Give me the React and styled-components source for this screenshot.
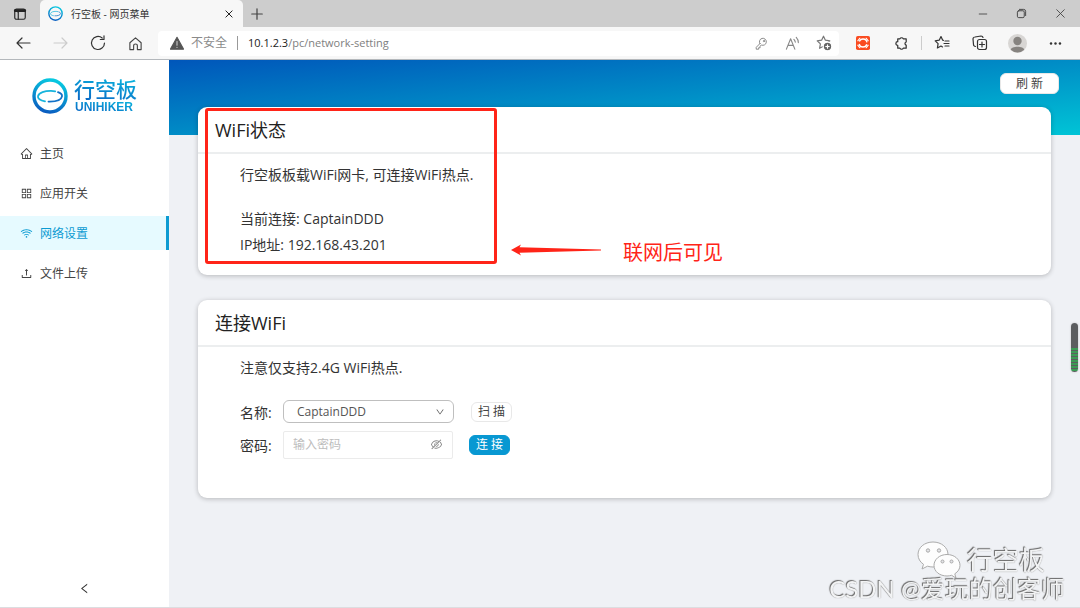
import React from "react";
import styled, { createGlobalStyle, css } from "styled-components";
import {
  AiOutlineHome,
  AiOutlineAppstore,
  AiOutlineWifi,
  AiOutlineUpload,
  AiOutlineEyeInvisible,
  AiOutlineDown,
  AiOutlineLeft,
} from "react-icons/ai";

const Global = createGlobalStyle`
  * { box-sizing: border-box; }
  body {
    margin: 0;
    background: #eff1f5;
    color: #333;
    font-family: "Open Sans", "Noto Sans CJK SC", sans-serif;
    font-size: 14px;
  }
  button, input, select { font: inherit; color: inherit; }
  svg { display: block; flex: none; }
`;

const Window = styled.div`
  min-height: 100vh;
  display: flex;
  flex-direction: column;
  border-bottom: 1px solid #dcdde0;
`;

/* Browser chrome */

const TabStrip = styled.header`
  height: 27px;
  display: flex;
  align-items: stretch;
  background: #cdcdcd;
`;

const IconButton = styled.button`
  display: flex;
  align-items: center;
  justify-content: center;
  flex: none;
  width: ${(p) => p.$w || 20}px;
  padding: 0;
  border: 0;
  background: none;
  color: ${(p) => p.$color || "#444"};
`;

const Tab = styled.div`
  width: 203px;
  display: flex;
  align-items: center;
  gap: 8px;
  padding: 0 4px 0 8px;
  border-radius: 5px 5px 0 0;
  background: #f7f7f7;
`;

const TabTitle = styled.span`
  flex: 1;
  font-size: 10px;
  line-height: 16px;
  white-space: nowrap;
`;

const Spacer = styled.div`
  flex: 1;
`;

const Toolbar = styled.div`
  height: 33px;
  display: flex;
  align-items: center;
  padding-right: 6px;
  background: #f7f7f7;
  border-bottom: 1px solid #b4b8bc;
`;

const AddressBar = styled.div`
  flex: 1;
  height: 25px;
  margin: 0 5px 0 8px;
  display: flex;
  align-items: center;
  padding-left: 12px;
  border-radius: 4px;
  background: #fff;
`;

const Security = styled.span`
  display: flex;
  align-items: center;
  gap: 7px;
  font-size: 12px;
  line-height: 18px;
  color: #8a8a8a;
`;

const Divider = styled.span`
  width: 1px;
  height: 14px;
  margin: 0 ${(p) => p.$gap}px;
  background: ${(p) => p.$color || "#999"};
`;

const Url = styled.span`
  flex: 1;
  font-size: 11px;
  line-height: 18px;
  color: #808080;
  b { font-weight: 400; color: #222; }
`;

/* Page */

const Page = styled.div`
  flex: 1;
  display: flex;
`;

const Sidebar = styled.aside`
  width: 169px;
  flex: none;
  display: flex;
  flex-direction: column;
  background: #fff;
`;

const Brand = styled.div`
  display: flex;
  align-items: center;
  gap: 6px;
  height: 76px;
  padding: 0 0 5px 32px;
`;

const gradientText = css`
  background: linear-gradient(10deg, #0a62c4, #08b8de);
  -webkit-background-clip: text;
  background-clip: text;
  color: transparent;
`;

const BrandText = styled.div`
  display: flex;
  flex-direction: column;
`;

const BrandName = styled.span`
  ${gradientText}
  font-size: 21px;
  font-weight: 500;
  line-height: 23px;
`;

const BrandLatin = styled.span`
  ${gradientText}
  padding-left: 1px;
  font-size: 12px;
  font-weight: 700;
  line-height: 12px;
  font-family: "Liberation Sans", sans-serif;
`;

const Nav = styled.nav`
  display: flex;
  flex-direction: column;
  gap: 6px;
`;

const NavLink = styled.a`
  display: flex;
  align-items: center;
  gap: 7px;
  height: 34px;
  padding-left: 20px;
  border-right: 3px solid ${(p) => (p.$active ? "#0c9bd2" : "transparent")};
  background: ${(p) => (p.$active ? "#e6faff" : "none")};
  color: ${(p) => (p.$active ? "#0c9bd2" : "#444")};
  font-size: 12px;
  text-decoration: none;
`;

const Collapse = styled.button`
  display: flex;
  justify-content: center;
  margin-top: auto;
  padding: 12px;
  border: 0;
  background: none;
  color: #333;
`;

const Main = styled.main`
  flex: 1;
  min-width: 0;
  display: flex;
  flex-direction: column;
  padding: 13px 21px 20px 29px;
  background: #eff1f5 linear-gradient(to bottom right, #0056ba, #008cc6 50%, #00c4d6) no-repeat;
  background-size: 100% 75px;
`;

const Button = styled.button`
  height: ${(p) => (p.$large ? 21 : 20)}px;
  width: ${(p) => (p.$large ? 59 : 41)}px;
  display: flex;
  align-items: center;
  justify-content: center;
  flex: none;
  padding: 0;
  border: 1px solid ${(p) => (p.$primary ? "#0898d2" : "#e8e8e8")};
  border-radius: 6px;
  background: ${(p) => (p.$primary ? "#0898d2" : "#fff")};
  color: ${(p) => (p.$primary ? "#fff" : "#444")};
  font-size: 12px;
  line-height: 18px;
`;

const Actions = styled.div`
  display: flex;
  justify-content: flex-end;
  margin-bottom: 13px;
`;

const Card = styled.section`
  position: relative;
  margin: 0 8px 25px 0;
  padding-bottom: ${(p) => p.$bottom}px;
  border-radius: 9px;
  background: #fff;
  box-shadow: 0 1px 5px rgba(0, 0, 0, 0.24);
`;

const CardTitle = styled.h2`
  margin: 0;
  height: 47px;
  padding-left: 17px;
  border-bottom: 2px solid #eceeef;
  font-size: 18px;
  font-weight: 400;
  line-height: 46px;
  color: #222;
`;

const CardBody = styled.div`
  padding: 8px 42px 0;
`;

const Line = styled.p`
  margin: 0 0 ${(p) => p.$after || 0}px;
  line-height: 26px;
`;

const Strong = styled.span`
  font-weight: 500;
`;

const Row = styled.div`
  display: grid;
  grid-template-columns: 43px 171px auto;
  align-items: center;
  height: 33px;
`;

const SelectBox = styled.div`
  position: relative;
  svg {
    position: absolute;
    right: 9px;
    top: 7px;
    pointer-events: none;
  }
`;

const Select = styled.select`
  appearance: none;
  display: block;
  width: 100%;
  height: 23px;
  padding: 0 24px 0 13px;
  border: 1px solid #bfbfbf;
  border-radius: 6px;
  background: #fff;
  color: #555;
  font-size: 12px;
`;

const PasswordBox = styled.div`
  display: flex;
  align-items: center;
  width: 170px;
  height: 28px;
  padding: 0 6px 0 9px;
  border: 1px solid #ebebeb;
  border-radius: 2px;
`;

const Input = styled.input`
  flex: 1;
  min-width: 0;
  padding: 0;
  border: 0;
  outline: 0;
  background: none;
  font-size: 12px;
  &::placeholder { color: #bdbdbd; }
`;

const Cell = styled.div`
  padding-left: ${(p) => p.$left}px;
`;

/* Notes drawn over the page */

const Highlight = styled.div`
  position: absolute;
  left: 7px;
  top: 1px;
  width: 292px;
  height: 156px;
  border: 3px solid #ff2418;
  border-radius: 3px;
  pointer-events: none;
`;

const Note = styled.div`
  position: absolute;
  left: 313px;
  top: 131px;
  display: flex;
  align-items: center;
  gap: 22px;
  color: #ff2418;
  font-size: 20px;
  line-height: 30px;
  svg { margin-bottom: 6px; }
`;

const Gauge = styled.div`
  position: fixed;
  right: 2px;
  top: 323px;
  width: 7px;
  height: 49px;
  border-radius: 4px;
  box-shadow: 0 0 2px #bbb;
  background: linear-gradient(#5b5d5f 24px, transparent 24px),
    repeating-linear-gradient(#5b5d5f 0 1px, #3c9a55 1px 3px);
`;

const Watermark = styled.div`
  position: fixed;
  right: 15px;
  bottom: 5px;
  display: flex;
  flex-direction: column;
  align-items: flex-end;
  color: #f2f3f4;
  text-shadow: -1px -1px 1px #666, 0 0 1px #888;
  pointer-events: none;
`;

const WatermarkBrand = styled.div`
  display: flex;
  align-items: center;
  gap: 6px;
  margin-bottom: -4px;
  padding-right: 20px;
  font-size: 26px;
  line-height: 38px;
`;

const WatermarkAuthor = styled.div`
  font-family: Lato, "Noto Sans CJK SC", sans-serif;
  font-size: 24px;
  line-height: 28px;
`;

function Glyph({ size = 16, width = 1.2, children, ...rest }) {
  return (
    <svg
      width={size}
      height={size}
      viewBox="0 0 16 16"
      fill="none"
      stroke="currentColor"
      strokeWidth={width}
      strokeLinecap="round"
      strokeLinejoin="round"
      aria-hidden="true"
      {...rest}
    >
      {children}
    </svg>
  );
}

function Logo({ size, id }) {
  return (
    <svg width={size} height={size} viewBox="0 0 36 36" fill="none" aria-hidden="true">
      <defs>
        <linearGradient id={id} x1="0.3" y1="1" x2="0.6" y2="0">
          <stop offset="0" stopColor="#0a5cc0" />
          <stop offset="1" stopColor="#08c8e0" />
        </linearGradient>
      </defs>
      <circle cx="18" cy="18" r="16" stroke={`url(#${id})`} strokeWidth="3.4" />
      <path d="M13 23.300C8 22.500 5.500 20.300 6 18.200 6.800 14.500 13 12.800 19 12.900c1.500 0 3 .2 4.200.5" stroke="#16b4dc" strokeWidth="1.800" strokeLinecap="round" />
      <path d="M26 14.200c3 1 4.300 2.600 4 4.200-.7 3.600-6 5.400-13.500 5.200" stroke="#1272c8" strokeWidth="1.800" strokeLinecap="round" />
    </svg>
  );
}

function BrowserChrome() {
  return (
    <>
      <TabStrip>
        <IconButton $w={40} $color="#222" aria-label="标签页操作">
          <Glyph size={14} width={1.3}>
            <rect x="2" y="2.500" width="12" height="11.500" rx="2" />
            <path d="M2.500 4.200h11" strokeWidth="3" />
            <path d="M6 6v8" />
          </Glyph>
        </IconButton>
        <Tab>
          <Logo size={15} id="tab-logo" />
          <TabTitle>行空板 - 网页菜单</TabTitle>
          <IconButton $color="#222" aria-label="关闭标签页">
            <Glyph size={10} width={1.6}><path d="M3 3l10 10M13 3L3 13" /></Glyph>
          </IconButton>
        </Tab>
        <IconButton $w={28} aria-label="新建标签页">
          <Glyph size={14} width={1.4}><path d="M8 2v12M2 8h12" /></Glyph>
        </IconButton>
        <Spacer />
        <IconButton $w={39} aria-label="最小化">
          <Glyph size={10} width={1.4}><path d="M2 8h12" /></Glyph>
        </IconButton>
        <IconButton $w={39} aria-label="还原">
          <Glyph size={11} width={1.4}>
            <rect x="2" y="4" width="10" height="10" rx="2" />
            <path d="M5 2h6a3 3 0 013 3v6" />
          </Glyph>
        </IconButton>
        <IconButton $w={39} aria-label="关闭">
          <Glyph size={11} width={1.3}><path d="M2.500 2.500l11 11M13.500 2.500l-11 11" /></Glyph>
        </IconButton>
      </TabStrip>
      <Toolbar>
        <IconButton $w={46} $color="#333" aria-label="后退">
          <Glyph><path d="M15 8H2M7 3L2 8l5 5" /></Glyph>
        </IconButton>
        <IconButton $w={30} $color="#ccc" aria-label="前进">
          <Glyph><path d="M1 8h13M9 3l5 5-5 5" /></Glyph>
        </IconButton>
        <IconButton $w={44} $color="#333" aria-label="刷新页面">
          <Glyph>
            <path d="M14.500 8A6.500 6.500 0 1112.200 3M14 .8v3.700h-3.700" />
          </Glyph>
        </IconButton>
        <IconButton $w={30} $color="#444" aria-label="主页">
          <Glyph size={15}>
            <path d="M2 7.200L8 2l6 5.200V14.500h-4v-4a2 2 0 00-4 0v4H2z" />
          </Glyph>
        </IconButton>
        <AddressBar>
          <Security>
            <Glyph size={14} stroke="none">
              <path d="M8 1.500L15.500 15H.5z" fill="#555" stroke="#555" />
              <path d="M8 6v4.500M8 12.800v.2" stroke="#ccc" strokeWidth="1.200" />
            </Glyph>
            不安全
          </Security>
          <Divider $gap={10} />
          <Url><b>10.1.2.3</b>/pc/network-setting</Url>
          <IconButton $w={31} $color="#888" aria-label="密码">
            <Glyph size={13}>
              <path d="M6 8.200L1.500 12.700V15h3v-1.800h1.800v-1.800l1.500-1.600A4.300 4.300 0 106 8.200z" />
              <circle cx="11" cy="5" r="0.800" />
            </Glyph>
          </IconButton>
          <IconButton $w={31} $color="#888" aria-label="朗读">
            <Glyph size={15}>
              <path d="M1.500 14L6 3l4.500 11M3.200 10h5.600M9.500 3.500a5 5 0 011.500 3M12 1.500a8 8 0 012.200 5.500" />
            </Glyph>
          </IconButton>
          <IconButton $w={31} $color="#777" aria-label="收藏">
            <Glyph>
              <path d="M7.500 1.200l1.900 4 4.400.6-3.200 3.100.7 4.400-3.800-2-3.900 2 .8-4.400L1.200 5.800l4.400-.6z" />
              <circle cx="11.500" cy="11.500" r="4.300" fill="#666" stroke="#fff" />
              <path d="M9.800 11.500h3.400M11.500 9.800v3.400" stroke="#fff" />
            </Glyph>
          </IconButton>
        </AddressBar>
        <IconButton $w={38} aria-label="扩展程序">
          <Glyph size={14} stroke="none">
            <rect width="16" height="16" rx="2" fill="#fa4b20" />
            <circle cx="8" cy="8" r="4.600" stroke="#fff" strokeWidth="1.600" strokeDasharray="11.400 3" strokeDashoffset="-1.500" strokeLinecap="butt" />
            <path d="M2 5.500L4.500 2.500M11.500 2.500L14 5.500M2 10.500l2.500 3M14 10.500l-2.500 3" stroke="#fff" strokeWidth="1.200" />
          </Glyph>
        </IconButton>
        <IconButton $w={38} $color="#333" aria-label="扩展">
          <Glyph size={15} width={1.3}>
            <path d="M4 3h2.300a2 2 0 013.600 0H13v3.400a1.700 1.700 0 000 3.300V13H9.900a2 2 0 01-3.600 0H4v-3a2 2 0 010-4z" />
          </Glyph>
        </IconButton>
        <Divider $gap={1} $color="#ccc" />
        <IconButton $w={38} $color="#333" aria-label="收藏夹">
          <Glyph>
            <path d="M9.500 5.300L8.700 5.200 7 1.500 5.200 5.200l-4 .6 2.900 2.900-.7 4.300L7 11l1.500.9M11 6h4M10 8.500h5M11 11h4" />
          </Glyph>
        </IconButton>
        <IconButton $w={37} $color="#333" aria-label="集锦">
          <Glyph>
            <rect x="5.500" y="4.500" width="9" height="10" rx="2" />
            <path d="M3.500 11.500A2 2 0 011.500 9.500L1 4a2 2 0 012-2l6-1a2 2 0 012 1.500M10 7v5M7.500 9.500h5" />
          </Glyph>
        </IconButton>
        <IconButton $w={39} aria-label="个人资料">
          <svg width="19" height="19" viewBox="0 0 19 19" aria-hidden="true">
            <circle cx="9.500" cy="9.500" r="9.500" fill="#d8d6d4" />
            <circle cx="9.500" cy="7" r="4.200" fill="#868380" />
            <path d="M2.800 15.800c0-4 13.400-4 13.400 0a9.500 9.500 0 01-13.400 0z" fill="#868380" />
          </svg>
        </IconButton>
        <IconButton $w={37} $color="#333" aria-label="更多">
          <Glyph size={13} stroke="none">
            <g fill="#333">
              <circle cx="2.500" cy="8" r="1.500" />
              <circle cx="8" cy="8" r="1.500" />
              <circle cx="13.500" cy="8" r="1.500" />
            </g>
          </Glyph>
        </IconButton>
      </Toolbar>
    </>
  );
}

const navItems = [
  { label: "主页", icon: AiOutlineHome },
  { label: "应用开关", icon: AiOutlineAppstore },
  { label: "网络设置", icon: AiOutlineWifi, active: true },
  { label: "文件上传", icon: AiOutlineUpload },
];

export default function App() {
  return (
    <Window>
      <Global />
      <BrowserChrome />
      <Page>
        <Sidebar>
          <Brand>
            <Logo size={36} id="brand-logo" />
            <BrandText>
              <BrandName>行空板</BrandName>
              <BrandLatin>UNIHIKER</BrandLatin>
            </BrandText>
          </Brand>
          <Nav>
            {navItems.map(({ label, icon: Icon, active }) => (
              <NavLink href="#" key={label} $active={active}>
                <Icon size={13} />
                {label}
              </NavLink>
            ))}
          </Nav>
          <Collapse aria-label="收起菜单">
            <AiOutlineLeft size={13} />
          </Collapse>
        </Sidebar>
        <Main>
          <Actions>
            <Button $large>刷 新</Button>
          </Actions>
          <Card $bottom={17}>
            <CardTitle>WiFi状态</CardTitle>
            <CardBody>
              <Line $after={18}>行空板板载WiFi网卡, 可连接WiFi热点.</Line>
              <Line>当前连接: <Strong>CaptainDDD</Strong></Line>
              <Line>IP地址: <Strong>192.168.43.201</Strong></Line>
            </CardBody>
            <Highlight />
            <Note>
              <svg width="90" height="12" viewBox="0 0 90 12" aria-hidden="true">
                <path d="M0 6L10 0.500 8.500 3.200 90 5.500V6.500L8.500 8.800 10 11.500z" fill="#ff2418" />
              </svg>
              联网后可见
            </Note>
          </Card>
          <Card $bottom={37}>
            <CardTitle>连接WiFi</CardTitle>
            <CardBody>
              <Line $after={14}>注意仅支持2.4G WiFi热点.</Line>
              <Row>
                <label htmlFor="ssid">名称:</label>
                <SelectBox>
                  <Select id="ssid" defaultValue="CaptainDDD">
                    <option>CaptainDDD</option>
                  </Select>
                  <AiOutlineDown size={10} color="#555" />
                </SelectBox>
                <Cell $left={17}><Button>扫 描</Button></Cell>
              </Row>
              <Row>
                <label htmlFor="password">密码:</label>
                <PasswordBox>
                  <Input id="password" type="password" placeholder="输入密码" />
                  <IconButton $color="#8a8a8a" aria-label="显示密码">
                    <AiOutlineEyeInvisible size={13} />
                  </IconButton>
                </PasswordBox>
                <Cell $left={15}><Button $primary>连 接</Button></Cell>
              </Row>
            </CardBody>
          </Card>
        </Main>
      </Page>
      <Gauge />
      <Watermark>
        <WatermarkBrand>
          <svg width="44" height="38" viewBox="0 0 44 38" fill="#fdfdfd" stroke="#aaa" aria-hidden="true">
            <path d="M16 1C7.500 1 1 6.500 1 13.500c0 4 2 7.500 5.500 9.800L5 28l5.500-2.800c1.700.5 3.500.8 5.500.8 8.500 0 15-5.500 15-12.500S24.500 1 16 1z" />
            <path d="M30 13.500c-7.300 0-13 4.800-13 10.900S22.700 35 30 35c1.600 0 3.200-.3 4.600-.7L39 37l-1.200-4.200c3.200-2 5.200-5 5.200-8.400 0-6.100-5.700-10.900-13-10.900z" />
            <g fill="#e4e5e8">
              <circle cx="11" cy="9.500" r="1.700" />
              <circle cx="22" cy="9.500" r="1.700" />
              <circle cx="25.500" cy="20.500" r="1.500" />
              <circle cx="34.500" cy="20.500" r="1.500" />
            </g>
          </svg>
          行空板
        </WatermarkBrand>
        <WatermarkAuthor>CSDN @爱玩的创客师</WatermarkAuthor>
      </Watermark>
    </Window>
  );
}
